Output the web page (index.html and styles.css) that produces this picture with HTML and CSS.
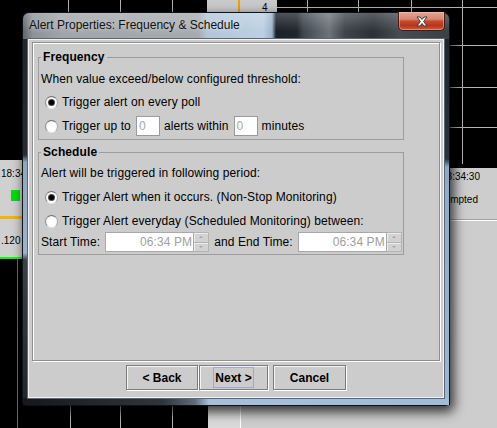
FILE: index.html
```html
<!DOCTYPE html>
<html lang="en">
<head>
<meta charset="utf-8">
<title>Alert Properties: Frequency &amp; Schedule</title>
<link rel="stylesheet" href="styles.css">
</head>
<body>
<svg class="backdrop" width="497" height="428" viewBox="0 0 497 428">
  <rect width="497" height="428" fill="#000"/>
  <g class="grid">
    <line x1="68.5" y1="0" x2="68.5" y2="13"/>
    <line x1="120.5" y1="0" x2="120.5" y2="13"/>
    <line x1="172.5" y1="0" x2="172.5" y2="13"/>
    <line x1="277" y1="7.5" x2="497" y2="7.5"/>
    <line x1="307.5" y1="0" x2="307.5" y2="13"/>
    <line x1="358.5" y1="0" x2="358.5" y2="13"/>
    <line x1="411.5" y1="0" x2="411.5" y2="13"/>
    <line x1="462.5" y1="0" x2="462.5" y2="164"/>
    <line x1="450" y1="45.5" x2="497" y2="45.5"/>
    <line x1="450" y1="87.5" x2="497" y2="87.5"/>
    <line x1="450" y1="127.5" x2="497" y2="127.5"/>
    <line x1="70.5" y1="405" x2="70.5" y2="428"/>
    <line x1="120.5" y1="405" x2="120.5" y2="428"/>
    <line x1="172.5" y1="405" x2="172.5" y2="428"/>
    <line x1="17.5" y1="259" x2="17.5" y2="428" class="dim"/>
  </g>
  <rect x="207" y="0" width="70" height="13" fill="#c9c9c9"/>
  <rect x="238" y="0" width="2" height="13" fill="#f0a000"/>
  <text x="262" y="11" class="bg-txt">4</text>
  <rect x="0" y="160" width="24" height="98" fill="#d0d0d0"/>
  <text x="1" y="177" class="bg-txt">18:34</text>
  <rect x="11" y="190" width="9" height="11" fill="#00e000"/>
  <rect x="0" y="216" width="24" height="3" fill="#f5b400"/>
  <text x="1" y="244" class="bg-txt">.120</text>
  <rect x="0" y="257" width="22" height="2" fill="#00ff00"/>
  <rect x="450" y="168" width="47" height="260" fill="#cdcdcd"/>
  <text x="480" y="180" text-anchor="end" class="bg-txt">18:34:30</text>
  <text x="478" y="203" text-anchor="end" class="bg-txt">Attempted</text>
  <rect x="450" y="219" width="47" height="1" fill="#a0a0a0"/>
  <rect x="450" y="220" width="47" height="1" fill="#ffffff"/>
  <rect x="208" y="405" width="32" height="23" fill="#dadada"/>
  <rect x="240" y="405" width="1" height="23" fill="#ffffff"/>
  <rect x="241" y="405" width="256" height="23" fill="#cdcdcd"/>
</svg>

<div class="dialog">
  <div class="titlebar">
    <span class="title">Alert Properties: Frequency &amp; Schedule</span>
    <span class="close">
      <svg width="14" height="11" viewBox="0 0 14 11">
        <path d="M2 1 L5 1 L7 3.5 L9 1 L12 1 L8.6 5.5 L12 10 L9 10 L7 7.5 L5 10 L2 10 L5.4 5.5 Z" fill="#fff" stroke="#3a3a3a" stroke-width="1" stroke-linejoin="round"/>
      </svg>
    </span>
  </div>
  <div class="frame">
    <div class="client">
      <div class="panel">
        <fieldset class="group freq">
          <legend>Frequency</legend>
          <div class="msg">When value exceed/below configured threshold:</div>
          <div class="row r1"><span class="radio on"></span><span>Trigger alert on every poll</span></div>
          <div class="row r2"><span class="radio"></span><span>Trigger up to</span><span class="tf">0</span><span>alerts within</span><span class="tf">0</span><span>minutes</span></div>
        </fieldset>
        <fieldset class="group sched">
          <legend>Schedule</legend>
          <div class="msg">Alert will be triggered in following period:</div>
          <div class="row r3"><span class="radio on"></span><span>Trigger Alert when it occurs. (Non-Stop Monitoring)</span></div>
          <div class="row r4"><span class="radio"></span><span>Trigger Alert everyday (Scheduled Monitoring) between:</span></div>
          <div class="row r5">
            <span>Start Time:</span>
            <span class="spin"><span class="spin-field">06:34 PM</span><span class="spin-btns"><span class="up"></span><span class="down"></span></span></span>
            <span>and End Time:</span>
            <span class="spin"><span class="spin-field">06:34 PM</span><span class="spin-btns"><span class="up"></span><span class="down"></span></span></span>
          </div>
        </fieldset>
      </div>
      <div class="buttons">
        <button class="btn back">&lt; Back</button>
        <button class="btn next"><span class="focus">Next &gt;</span></button>
        <button class="btn cancel">Cancel</button>
      </div>
    </div>
  </div>
</div>
</body>
</html>
```

FILE: styles.css
```css
html, body {
  margin: 0;
  padding: 0;
}
body {
  width: 497px;
  height: 428px;
  overflow: hidden;
  position: relative;
  background: #000;
  font-family: "Liberation Sans", Arial, sans-serif;
  font-size: 12px;
  color: #000;
}
.backdrop {
  display: block;
}
.grid line {
  stroke: #b4b4b4;
  stroke-width: 1;
}
.grid line.dim {
  stroke: #6a6a6a;
}
.bg-txt {
  font-family: "Liberation Sans", Arial, sans-serif;
  font-size: 10px;
  fill: #000;
}

/* Window */
.dialog {
  position: absolute;
  left: 22px;
  top: 12px;
  width: 428px;
  height: 394px;
  box-sizing: border-box;
  border: 1px solid rgba(10, 14, 18, 0.85);
  border-radius: 7px 7px 5px 5px;
  display: flex;
  flex-direction: column;
  box-shadow: 3px 5px 12px 1px rgba(0, 0, 0, 0.75);
  background: #2a3036;
}
.titlebar {
  height: 26px;
  flex: none;
  display: flex;
  align-items: flex-start;
  border-radius: 6px 6px 0 0;
  background:
    linear-gradient(rgba(255,255,255,0.22), rgba(255,255,255,0) 70%),
    linear-gradient(to right, #5f656b 0px, #8e9297 10px, #a1a5a9 40px, #a6aaae 175px, #b3c5d8 184px, #bdd0e3 240px, #9db3ca 249px, #1a2128 253px, #1f262d 274px, #3d454d 280px, #5b636b 296px, #6c737a 306px, #3d444b 322px, #2b3137 350px, #464c52 376px, #3a4046 426px);
}
.title {
  padding: 5px 0 0 6px;
  line-height: 15px;
  font-size: 12px;
  color: #111;
  text-shadow: 0 0 6px rgba(255,255,255,0.7);
  flex: 1;
}
.close {
  width: 47px;
  height: 19px;
  margin: -1px 4px 0 0;
  box-sizing: border-box;
  border: 1px solid #4a1a12;
  border-top: none;
  border-radius: 0 0 5px 5px;
  display: flex;
  align-items: center;
  justify-content: center;
  background: linear-gradient(#e3a797 0%, #d58672 40%, #c44a2c 52%, #b8351c 75%, #cf5a36 100%);
  box-shadow: inset 0 0 0 1px rgba(255, 200, 180, 0.45);
}
.close svg {
  display: block;
}

.frame {
  flex: 1;
  display: flex;
  padding: 0 5px 7px 5px;
  background:
    linear-gradient(to right, #15191d 0px, #30363c 140px, #5f6d7b 172px, #a7bfd8 186px, #a2bbd6 100%) left bottom / 100% 7px no-repeat,
    linear-gradient(#20262c 0px, #262c33 116px, #8ea6bf 123px, #9db3c9 214px, #3a4148 221px, #20262b 100%) left top / 5px 100% no-repeat,
    linear-gradient(#1f252b 0px, #2c333a 120px, #8fa9c6 128px, #9cb7d5 100%) right top / 5px 100% no-repeat,
    #2a3036;
}
.client {
  flex: 1;
  display: flex;
  flex-direction: column;
  background: #cccccc;
  border: 1px solid #f2f2f2;
  box-shadow: 0 0 0 1px #5b6775;
  padding: 2px 3px 0 3px;
  letter-spacing: 0.1px;
}
.panel {
  height: 319px;
  flex: none;
  box-sizing: border-box;
  border: 1px solid #8f8f8f;
  box-shadow: inset 1px 1px 0 #ffffff, 1px 1px 0 #ffffff;
  padding: 0 0 0 5px;
}

/* Groups */
.group {
  width: 366px;
  box-sizing: border-box;
  margin: 0;
  border: 1px solid #9c9c9c;
  padding: 0 2px 2px 2px;
  min-width: 0;
}
.group.freq {
  margin-top: 7px;
}
.group.sched {
  margin-top: 5px;
  padding-bottom: 1px;
}
legend {
  padding: 0 2px;
  font-weight: bold;
  line-height: 14px;
  font-size: 12px;
}
.msg {
  line-height: 14px;
  margin-top: 8px;
}
.sched .msg {
  margin-top: 7px;
}
.row {
  display: flex;
  align-items: center;
  line-height: 14px;
  white-space: nowrap;
}
.r1 { height: 18px; margin-top: 7px; }
.r2 { height: 22px; margin-top: 4px; }
.r3 { height: 18px; margin-top: 8px; }
.r4 { height: 18px; margin-top: 6px; }
.r5 { height: 22px; margin-top: 1px; }

.radio {
  flex: none;
  width: 13px;
  height: 13px;
  margin: 0 4px 0 4px;
  box-sizing: border-box;
  border-radius: 50%;
  border: 1px solid;
  border-color: #6f6f6f #a9a9a9 #e6e6e6 #8a8a8a;
  background: radial-gradient(circle at 60% 60%, #ffffff 0%, #ffffff 45%, #e2e2e2 100%);
  position: relative;
}
.radio.on::after {
  content: "";
  position: absolute;
  left: 3px;
  top: 3px;
  width: 5px;
  height: 5px;
  border-radius: 50%;
  background: #000;
  box-shadow: 0 0 0 1px #4a4a4a;
}

.tf {
  width: 24px;
  height: 20px;
  box-sizing: border-box;
  margin: 0 4px 0 5px;
  border: 1px solid #9a9a9a;
  background: #ffffff;
  color: #a8a8a8;
  padding-left: 2px;
  line-height: 18px;
}

.spin {
  display: flex;
  height: 20px;
  margin: 0 5px 0 5px;
}
.spin-field {
  width: 89px;
  box-sizing: border-box;
  border: 1px solid #a8a8a8;
  background: #ffffff;
  color: #a0a0a0;
  text-align: right;
  padding-right: 1px;
  line-height: 18px;
  font-size: 12px;
}
.spin-btns {
  width: 15px;
  box-sizing: border-box;
  border: 1px solid #b4b4b4;
  border-left: none;
  display: flex;
  flex-direction: column;
  background: #d2d2d2;
}
.spin-btns span {
  flex: 1;
  position: relative;
  box-shadow: inset 1px 1px 0 #ececec;
}
.spin-btns .up {
  border-bottom: 1px solid #b4b4b4;
}
.spin-btns .up::after,
.spin-btns .down::after {
  content: "";
  position: absolute;
  left: 5px;
  top: 3px;
  border-left: 2px solid transparent;
  border-right: 2px solid transparent;
}
.spin-btns .up::after {
  border-bottom: 2px solid #a6a6a6;
}
.spin-btns .down::after {
  border-top: 2px solid #a6a6a6;
}

/* Buttons */
.buttons {
  display: flex;
  justify-content: center;
  margin-top: 4px;
  letter-spacing: 0;
}
.btn {
  height: 25px;
  box-sizing: border-box;
  border: 1px solid #7c7c7c;
  box-shadow: inset 1px 1px 0 #f4f4f4, 1px 1px 0 #ffffff;
  background: #cccccc;
  font-family: "Liberation Sans", Arial, sans-serif;
  font-size: 12px;
  font-weight: bold;
  color: #000;
  padding: 0;
  margin: 0;
  display: flex;
  align-items: center;
  justify-content: center;
}
.btn.back { width: 72px; }
.btn.next { width: 69px; margin-left: 1px; }
.btn.cancel { width: 73px; margin-left: 5px; }
.focus {
  border: 1px solid #a4a4d6;
  padding: 3px 1px 2px 1px;
  line-height: 14px;
}
```
